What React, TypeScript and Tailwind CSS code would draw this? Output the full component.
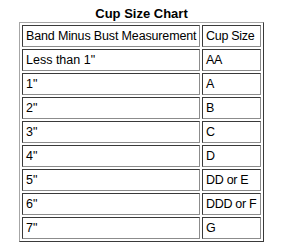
import React from 'react';

type Row = { band: string; cup: string };

const rows: Row[] = [
  { band: 'Less than 1"', cup: 'AA' },
  { band: '1"', cup: 'A' },
  { band: '2"', cup: 'B' },
  { band: '3"', cup: 'C' },
  { band: '4"', cup: 'D' },
  { band: '5"', cup: 'DD or E' },
  { band: '6"', cup: 'DDD or F' },
  { band: '7"', cup: 'G' },
];

// old-school "border=1" table: outset frame, inset cells
const cell =
  'h-[22px] px-[3px] py-0 align-middle text-left font-normal whitespace-nowrap border border-t-[#3a3a3a] border-l-[#3a3a3a] border-r-[#8c8c8c] border-b-[#8c8c8c]';

const App: React.FC = () => {
  return (
    <div className="w-[283px] h-[245px] bg-white pt-[6px] text-[12.5px] leading-[15px] text-black font-['Arial','Liberation_Sans',sans-serif]">
      <table className="mx-auto w-[245px] table-fixed border-separate border-spacing-[2px] border border-t-[#a6a6a6] border-l-[#a6a6a6] border-r-[#3a3a3a] border-b-[#3a3a3a]">
        <caption className="font-bold text-[13px] leading-[16px]">Cup Size Chart</caption>
        <colgroup>
          <col className="w-[178px]" />
          <col className="w-[59px]" />
        </colgroup>
        <thead>
          <tr>
            <th className={`${cell} tracking-[-0.15px]`}>Band Minus Bust Measurement</th>
            <th className={`${cell} tracking-[-0.3px]`}>Cup Size</th>
          </tr>
        </thead>
        <tbody>
          {rows.map((r) => (
            <tr key={r.band}>
              <td className={cell}>{r.band}</td>
              <td className={`${cell} tracking-[-0.3px]`}>{r.cup}</td>
            </tr>
          ))}
        </tbody>
      </table>
    </div>
  );
};

export default App;
